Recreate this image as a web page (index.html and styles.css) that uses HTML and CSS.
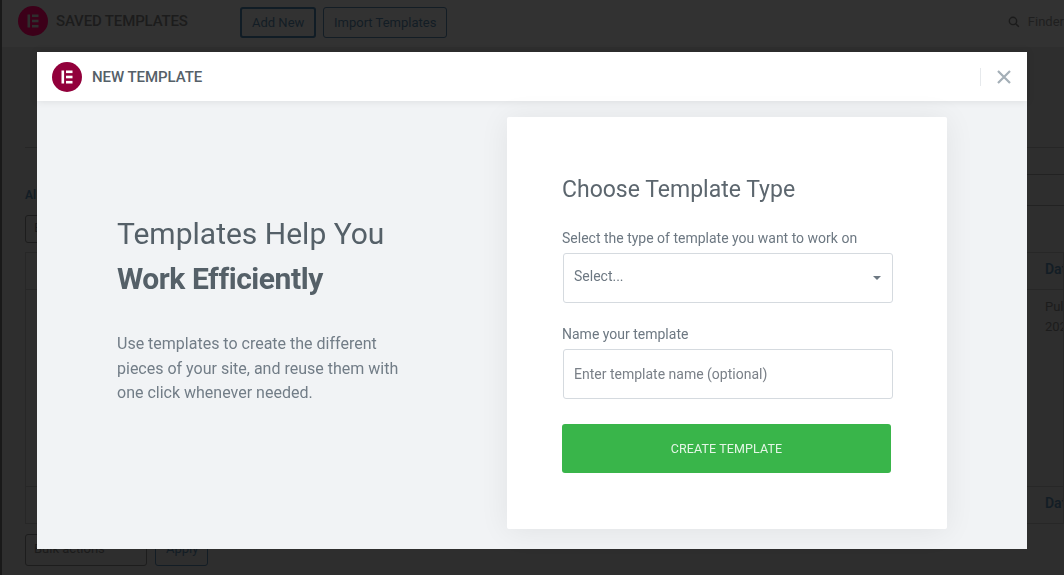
FILE: index.html
```html
<!DOCTYPE html>
<html lang="en">
<head>
<meta charset="utf-8">
<title>New Template</title>
<link rel="stylesheet" href="styles.css">
</head>
<body>
<div class="page">
  <header class="topbar">
    <svg class="logo" viewBox="0 0 30 30" width="30" height="30"><circle cx="15" cy="15" r="15" fill="#3c0019"/><rect x="9.5" y="8.5" width="2.6" height="13" fill="#2e2e2e"/><rect x="14" y="8.5" width="6.5" height="2.6" fill="#2e2e2e"/><rect x="14" y="13.7" width="6.5" height="2.6" fill="#2e2e2e"/><rect x="14" y="18.9" width="6.5" height="2.6" fill="#2e2e2e"/></svg>
    <span class="topbar-title">SAVED TEMPLATES</span>
    <span class="top-btn top-btn-primary">Add New</span>
    <span class="top-btn">Import Templates</span>
    <span class="finder">
      <svg viewBox="0 0 14 14" width="12" height="12"><circle cx="5.8" cy="5.8" r="4.3" fill="none" stroke="#1b1b1b" stroke-width="1.6"/><path d="M9 9l3.6 3.6" stroke="#1b1b1b" stroke-width="1.8"/></svg>
      Finder
    </span>
  </header>
  <div class="under">
    <div class="under-tabs"></div>
    <div class="under-mid">
      <div class="under-left">
        <div class="under-all">All</div>
        <div class="under-filter">B</div>
      </div>
      <div class="under-right">
        <div class="under-line"></div>
        <div class="under-line under-line-tall"></div>
      </div>
    </div>
    <div class="under-table">
      <div class="under-row under-head"><span>Dat</span></div>
      <div class="under-row under-body"><span>Pul<br>202</span></div>
      <div class="under-row under-head"><span>Dat</span></div>
    </div>
    <div class="under-actions">
      <span class="under-select">Bulk actions</span>
      <span class="under-apply">Apply</span>
    </div>
  </div>
</div>

<div class="modal">
  <div class="modal-head">
    <svg class="logo" viewBox="0 0 30 30" width="30" height="30"><circle cx="15" cy="15" r="15" fill="#92003b"/><rect x="9.5" y="8.5" width="2.6" height="13" fill="#fff"/><rect x="14" y="8.5" width="6.5" height="2.6" fill="#fff"/><rect x="14" y="13.7" width="6.5" height="2.6" fill="#fff"/><rect x="14" y="18.9" width="6.5" height="2.6" fill="#fff"/></svg>
    <span class="modal-title">NEW TEMPLATE</span>
    <span class="modal-sep"></span>
    <svg class="modal-close" viewBox="0 0 14 14" width="14" height="14"><path d="M1 1l12 12M13 1L1 13" stroke="#a4afb7" stroke-width="2.2" fill="none"/></svg>
  </div>
  <div class="modal-body">
    <div class="intro">
      <h2 class="intro-title">Templates Help You <strong>Work Efficiently</strong></h2>
      <p class="intro-text">Use templates to create the different pieces of your site, and reuse them with one click whenever needed.</p>
    </div>
    <form class="card">
      <h3 class="card-title">Choose Template Type</h3>
      <label class="field-label">Select the type of template you want to work on</label>
      <div class="select"><span>Select...</span><i class="caret"></i></div>
      <label class="field-label field-label-name">Name your template</label>
      <div class="input">Enter template name (optional)</div>
      <div class="submit">CREATE TEMPLATE</div>
    </form>
  </div>
</div>
</body>
</html>
```

FILE: styles.css
```css
* { box-sizing: border-box; }
html, body { margin: 0; height: 575px; overflow: hidden; }
body { background: #2e2e2e; font-family: Roboto, "Liberation Sans", sans-serif; color: #1b1b1b; }

.page { height: 575px; border-left: 2px solid #191919; overflow: hidden; }
.topbar { height: 47px; display: flex; align-items: center; padding-left: 16px; background: #323232; font-size: 13px; }
.topbar .logo { margin-top: -5px; }
.topbar-title { margin-left: 8px; margin-top: -6px; font-size: 15px; font-weight: 500; letter-spacing: -.15px; color: #1c1c1c; width: 184px; white-space: nowrap; }
.top-btn { height: 31px; display: flex; align-items: center; padding: 0 10px; margin-top: -3px; margin-right: 7px; border: 1px solid #131d25; border-radius: 3px; color: #131d25; white-space: nowrap; }
.top-btn-primary { width: 76px; border-width: 2px; border-color: #101c25; padding: 0 10px; }
.finder { margin-left: auto; display: flex; align-items: center; gap: 8px; margin-top: -4px; white-space: nowrap; font-size: 13px; color: #1f1f1f; }

.under { padding-left: 23px; display: flex; flex-direction: column; }
.under-tabs { height: 101px; border-bottom: 1px solid #262626; margin-right: 0; }
.under-mid { height: 103px; display: flex; justify-content: space-between; }
.under-left { display: flex; flex-direction: column; }
.under-all { margin-top: 40px; font-size: 12px; font-weight: 600; color: #131d25; height: 27px; }
.under-filter { width: 60px; height: 28px; padding: 4px 8px; border: 1px solid #1d1d1d; border-radius: 3px; font-size: 13px; }
.under-right { width: 100px; }
.under-line { height: 27px; border-bottom: 1px solid #222; }
.under-line-tall { height: 31px; }
.under-table { margin-top: 1px; border: 1px solid #272727; }
.under-row { display: flex; justify-content: flex-end; }
.under-row span { width: 18px; padding-top: 8px; font-size: 13px; overflow: hidden; white-space: nowrap; }
.under-head { height: 36px; }
.under-head span { font-size: 14px; font-weight: 600; color: #131d25; }
.under-body { height: 198px; border-top: 1px solid #272727; border-bottom: 1px solid #272727; }
.under-body span { line-height: 20px; padding-top: 7px; color: #1c1c1c; }
.under-actions { margin-top: 10px; display: flex; gap: 8px; font-size: 13px; }
.under-select { width: 122px; height: 32px; padding: 6px 8px; border: 1px solid #1d1d1d; border-radius: 3px; }
.under-apply { width: 53px; height: 32px; padding: 6px 10px; border: 1px solid #131d25; border-radius: 3px; color: #131d25; }

.modal { position: fixed; left: 37px; top: 52px; width: 990px; height: 497px; background: #f1f3f5; display: flex; flex-direction: column; }
.modal-head { height: 49px; background: #fff; display: flex; align-items: center; padding: 0 16px 0 15px; box-shadow: 0 0 8px rgba(0,0,0,.1); }
.modal-title { margin-left: 10px; font-size: 15px; font-weight: 500; letter-spacing: -.05px; color: #556068; }
.modal-sep { margin-left: auto; width: 1px; height: 18px; background: #e6e9ec; }
.modal-close { margin-left: 16px; }
.modal-body { flex: 1; display: flex; padding: 16px 80px 20px; }

.intro { width: 390px; padding-top: 94px; }
.intro-title { margin: 0; width: 290px; font-size: 30px; line-height: 45px; font-weight: 400; color: #556068; }
.intro-title strong { font-weight: 700; letter-spacing: -.45px; white-space: nowrap; }
.intro-text { margin: 31px 0 0; width: 290px; font-size: 16px; line-height: 24.5px; color: #727d87; }

.card { width: 440px; height: 412px; background: #fff; padding: 59px 55px 0; border-radius: 2px; box-shadow: 0 2px 30px rgba(0,0,0,.07); display: flex; flex-direction: column; }
.card-title { margin: 0; font-size: 23px; line-height: 28px; font-weight: 400; color: #5c666e; }
.field-label { margin-top: 26px; font-size: 14px; line-height: 17px; color: #6d7882; white-space: nowrap; }
.field-label-name { margin-top: 23px; }
.select, .input { margin-top: 6px; margin-left: 1px; width: 330px; height: 50px; padding: 0 10px; border: 1px solid #d5dadf; border-radius: 3px; display: flex; align-items: center; font-size: 14px; color: #6d7882; }
.select { justify-content: space-between; }
.select span { margin-top: -4px; }
.select .caret { margin-right: 1px; margin-top: -1px; }
.input { margin-top: 6px; color: #7a8088; }
.caret { width: 0; height: 0; border: 4px solid transparent; border-top: 4px solid #6d7882; border-bottom: 0; }
.submit { margin-top: 25px; width: 329px; height: 49px; background: #39b54a; border-radius: 3px; color: #e4f6e6; font-size: 12.5px; font-weight: 400; letter-spacing: .1px; display: flex; align-items: center; justify-content: center; }
```
